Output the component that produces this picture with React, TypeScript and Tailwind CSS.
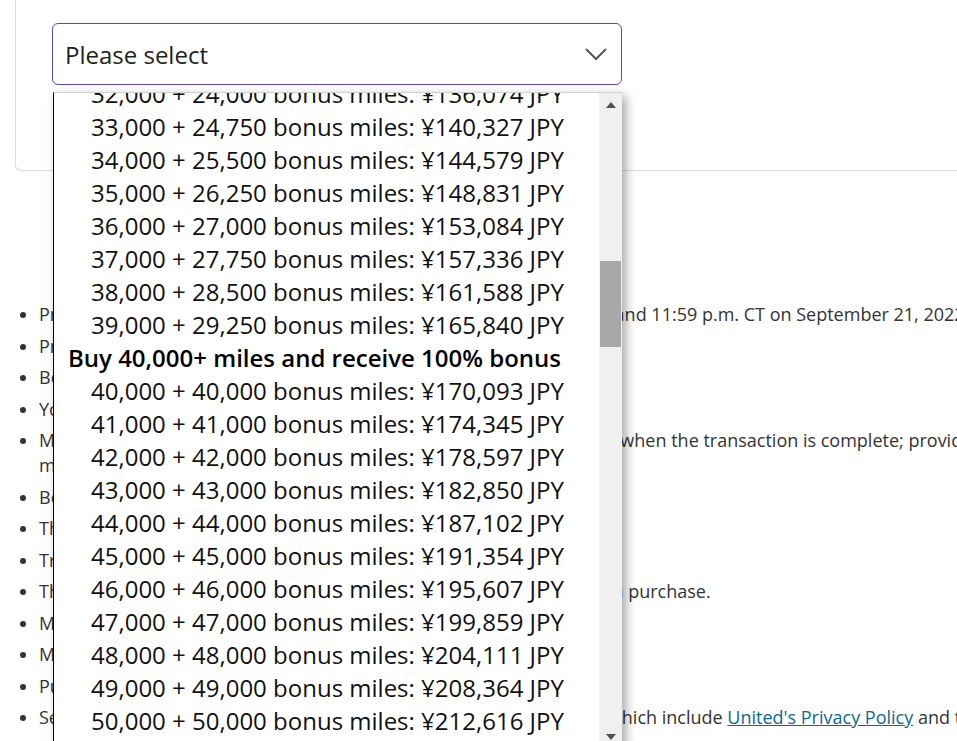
import { FC } from "react";

type Row = { label: string; group?: boolean };

const rows: Row[] = [
  { label: "32,000 + 24,000 bonus miles: ¥136,074 JPY" },
  { label: "33,000 + 24,750 bonus miles: ¥140,327 JPY" },
  { label: "34,000 + 25,500 bonus miles: ¥144,579 JPY" },
  { label: "35,000 + 26,250 bonus miles: ¥148,831 JPY" },
  { label: "36,000 + 27,000 bonus miles: ¥153,084 JPY" },
  { label: "37,000 + 27,750 bonus miles: ¥157,336 JPY" },
  { label: "38,000 + 28,500 bonus miles: ¥161,588 JPY" },
  { label: "39,000 + 29,250 bonus miles: ¥165,840 JPY" },
  { label: "Buy 40,000+ miles and receive 100% bonus", group: true },
  { label: "40,000 + 40,000 bonus miles: ¥170,093 JPY" },
  { label: "41,000 + 41,000 bonus miles: ¥174,345 JPY" },
  { label: "42,000 + 42,000 bonus miles: ¥178,597 JPY" },
  { label: "43,000 + 43,000 bonus miles: ¥182,850 JPY" },
  { label: "44,000 + 44,000 bonus miles: ¥187,102 JPY" },
  { label: "45,000 + 45,000 bonus miles: ¥191,354 JPY" },
  { label: "46,000 + 46,000 bonus miles: ¥195,607 JPY" },
  { label: "47,000 + 47,000 bonus miles: ¥199,859 JPY" },
  { label: "48,000 + 48,000 bonus miles: ¥204,111 JPY" },
  { label: "49,000 + 49,000 bonus miles: ¥208,364 JPY" },
  { label: "50,000 + 50,000 bonus miles: ¥212,616 JPY" },
  { label: "51,000 + 51,000 bonus miles: ¥216,868 JPY" },
];

const terms: React.ReactNode[] = [
  "Promotion valid for purchase made between 12:01 am on August 22 and 11:59 p.m. CT on September 21, 2022.",
  "Promotion is only available to MileagePlus members.",
  "Bonus miles are limited per account.",
  "You may purchase miles for yourself.",
  <>
    Miles purchased will be deposited onto your account within 72 hours when the transaction is complete; provided, however, that United may delay the deposit of
    <br />
    miles for any reason.
  </>,
  "Bonus miles will be deposited with the purchase.",
  "The purchase of miles is non-refundable.",
  "Transactions are final.",
  "The bonus miles will be deposited onto the MileagePlus account upon purchase.",
  "Miles are not transferable.",
  "Miles may not be combined.",
  "Purchased miles are subject to terms.",
  <>
    Services are subject to the terms of the MileagePlus Program Rules, which include{" "}
    <a href="#" className="text-[#0b6a8c] underline">
      United's Privacy Policy
    </a>{" "}
    and the MileagePlus Program Rules.
  </>,
];

const Chevron: FC = () => (
  <svg width="24" height="16" viewBox="0 0 24 16" fill="none">
    <polyline points="2,3 12,13 22,3" stroke="#555" strokeWidth="2" />
  </svg>
);

const Dropdown: FC = () => (
  <div className="absolute left-[53px] top-[92px] w-[569px] h-[660px] flex bg-white border-l border-t border-l-black border-t-[#d0d0d0] overflow-hidden shadow-[4px_4px_10px_rgba(0,0,0,0.35)]">
    <div className="flex-1 overflow-hidden">
      <ul className="-mt-[16px]">
        {rows.map((r) => (
          <li
            key={r.label}
            className={
              r.group
                ? "h-[33px] leading-[33px] pl-[14px] font-semibold text-black whitespace-nowrap"
                : "h-[33px] leading-[33px] pl-[37px] text-[#111] whitespace-nowrap"
            }
          >
            {r.label}
          </li>
        ))}
      </ul>
    </div>
    <div className="w-[23px] bg-[#f0f0f0] flex flex-col items-center">
      <svg width="10" height="6" viewBox="0 0 10 6" className="mt-[9px]">
        <polygon points="0,6 5,0 10,6" fill="#505050" />
      </svg>
      <div className="mt-[153px] w-[21px] h-[86px] bg-[#a8a8a8]" />
      <svg width="10" height="6" viewBox="0 0 10 6" className="mt-[387px]">
        <polygon points="0,0 5,6 10,0" fill="#505050" />
      </svg>
    </div>
  </div>
);

export default function App() {
  return (
    <div className="relative w-[957px] h-[741px] overflow-hidden bg-white font-['Open_Sans',sans-serif] text-[24px]">
      <div className="ml-[15px] h-[171px] border-l border-b border-[#dcdcdc] rounded-bl-md pt-[23px] pl-[36px]">
        <div className="w-[570px] h-[62px] border border-[#6244bb] rounded-md flex items-center justify-between pl-[12px] pr-[13px] text-[#222]">
          <span className="mt-[2px]">Please select</span>
          <Chevron />
        </div>
      </div>

      <ul className="mt-[131px] pl-[39px] pr-4 list-disc text-[18px] leading-[25px] text-[#333] flex flex-col gap-[6.5px] w-[1600px]">
        {terms.map((t, i) => (
          <li key={i}>{t}</li>
        ))}
      </ul>

      <Dropdown />
    </div>
  );
}
